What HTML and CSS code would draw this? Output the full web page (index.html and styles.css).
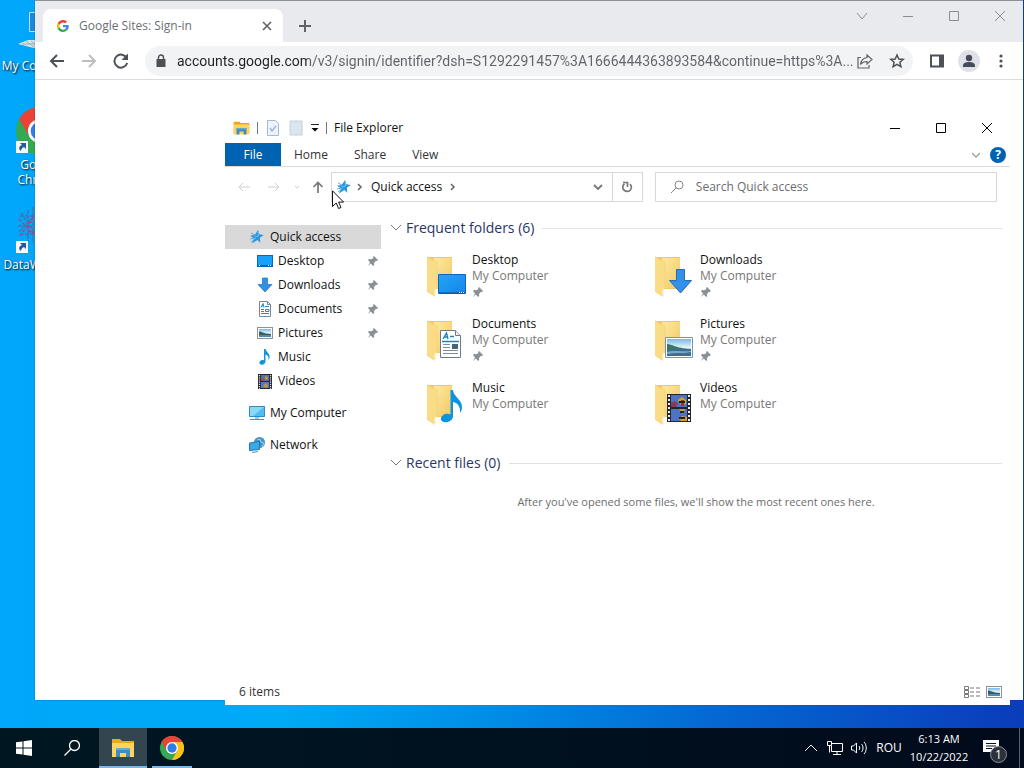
FILE: index.html
```html
<!DOCTYPE html>
<html lang="en">
<head>
  <meta charset="UTF-8">
  <meta name="viewport" content="width=device-width, initial-scale=1.0">
  <title>Desktop</title>
  <link rel="stylesheet" href="styles.css">
</head>
<body>

<!-- shared icons -->
<svg class="sprite" aria-hidden="true">
  <defs>
    <linearGradient id="g-folder" x1="0" y1="0" x2="1" y2="1">
      <stop offset="0" stop-color="#ffe9a6"/><stop offset="1" stop-color="#f0c860"/>
    </linearGradient>
    <linearGradient id="g-blue" x1="0" y1="0" x2="1" y2="1">
      <stop offset="0" stop-color="#22a7f5"/><stop offset="1" stop-color="#1684ea"/>
    </linearGradient>
    <linearGradient id="g-sky" x1="0" y1="0" x2="0" y2="1">
      <stop offset="0" stop-color="#79b8ea"/><stop offset="0.5" stop-color="#e6f5fb"/><stop offset="1" stop-color="#8cc4dc"/>
    </linearGradient>
  </defs>
  <symbol id="pin" viewBox="0 0 12 12">
    <path d="M7 1l4 4-1 1-1-.3L7 8l.2 2-1 1-2.400-2.500L1 11l2-3.600L1 5l1-1 2.200.200L6.500 3 6 2z" fill="#8b9096"/>
  </symbol>
  <symbol id="star" viewBox="0 0 16 16">
    <path d="M9 1l1.300 4.300 4.500.7-4 2.700.6 5L8.300 11 3 14.500l2-5-4-2.800 4.800-.7z" fill="#2b93dc"/>
    <path d="M2 4l4 2M1 10l5-1M2 13l5-4" stroke="#5cb0e6" stroke-width="1"/>
    <path d="M9 3l.5 4-4 1" stroke="#6dc3f5" fill="none"/>
  </symbol>
  <symbol id="desktop" viewBox="0 0 16 16">
    <rect x=".5" y="2.500" width="15" height="11" fill="#18a0fb" stroke="#0c68b4"/>
    <path d="M1 12.500h14" stroke="#0a5ca8"/>
    <path d="M2 12.500h1M11 12.500h1M13 12.500h1" stroke="#fff"/>
  </symbol>
  <symbol id="down" viewBox="0 0 16 16">
    <path d="M5.500 1h5v6.500h4.500L8 15 1 7.500h4.500z" fill="#3390e2" stroke="#2273c4" stroke-width=".7"/>
  </symbol>
  <symbol id="doc" viewBox="0 0 16 16">
    <path d="M2.500.5h8l3 3v12h-11z" fill="#fff" stroke="#7b8794"/>
    <path d="M10.500.5v3h3" fill="none" stroke="#7b8794"/>
    <path d="M4 6.500l2-4 1 4M4.500 5h2M8 5.500h4M4 8.500h3M4 10.500h3M4 12.500h8M8.500 8.500h3.500v2H8.500z" fill="none" stroke="#3483b8"/>
  </symbol>
  <symbol id="pic" viewBox="0 0 16 16">
    <rect x=".5" y="2.500" width="15" height="11" fill="#fff" stroke="#8795a3"/>
    <rect x="2" y="4" width="12" height="8" fill="url(#g-sky)"/>
    <path d="M2 6.500c3 0 4 2 12 2.500v1H2z" fill="#36605d"/>
    <path d="M2 10h12v2H2z" fill="#4c8bb8"/>
  </symbol>
  <symbol id="note" viewBox="0 0 16 16">
    <path d="M7 0h1.500c.5 3 5 4.500 4 9-.2 1-.7 1.500-1 2 .4-3-.5-4.500-3-5.500v7c0 2-2 3.500-4 3.300-2-.2-2.800-2-1.500-3.500 1-1.200 2.700-1.600 4-1z" fill="#1295de"/>
  </symbol>
  <symbol id="film" viewBox="0 0 16 16">
    <rect x="1" y="1" width="14" height="15" fill="#25272b"/>
    <rect x="4" y="2" width="8" height="6" fill="#536fb5"/>
    <rect x="4" y="9" width="8" height="6" fill="#5d78c2"/>
    <path d="M8 3l3 1v2L8 7zM6 13l3-3 2 3-2 2z" fill="#c09a2c"/>
    <path d="M4 6l3-1v3H4z" fill="#9a4c68"/>
    <path d="M2.500 2v14M13.500 2v14" stroke="#e5e6ea" stroke-width="1.200" stroke-dasharray="1.200 1"/>
  </symbol>
  <symbol id="explorer" viewBox="0 0 24 20">
    <path d="M1 1h8l2 2h12v15H1z" fill="#e8a91e"/>
    <path d="M1 5h22v14H1z" fill="#ffd35c"/>
    <path d="M5 19v-9h14v9h-4v-4H9v4z" fill="#3c8cc4"/>
    <path d="M5 10h14v2H5z" fill="#66a9d4"/>
  </symbol>
  <symbol id="folder" viewBox="0 0 42 42">
    <path d="M2 2h24v32H6z" fill="#efc865"/>
    <path d="M8 3h18v30H8z" fill="url(#g-folder)"/>
    <path d="M1 2l10 5v27l-2 1v7L1 37z" fill="#fbdc86"/>
    <path d="M1 2l10 5v27" fill="none" stroke="#f4d27a"/>
    <path d="M8 36l2-3v6l-1 3z" fill="#fff4cd"/>
  </symbol>
  <symbol id="chrome" viewBox="0 0 48 48">
    <circle cx="24" cy="24" r="24" fill="#34a853"/>
    <path d="M24 24L3.200 12A24 24 0 0 1 44.800 12z" fill="#ea4335"/>
    <path d="M24 12h20.800A24 24 0 0 1 24 48l10.400-18z" fill="#fbc116"/>
    <path d="M3.200 12L13.600 30 24 24V12z" fill="#ea4335"/>
    <circle cx="24" cy="24" r="12" fill="#fff"/>
    <circle cx="24" cy="24" r="9.300" fill="#2f7de9"/>
  </symbol>
  <symbol id="shortcut" viewBox="0 0 12 12">
    <path d="M0 0h12v12H0z" fill="#f5f8fc"/>
    <path d="M4 2h6v6L8 6c-2 1-3 2-3 4-3-2-2-5 1-6z" fill="#235b9f"/>
  </symbol>
</svg>

<div class="desktop">
  <div class="workspace">

    <div class="shortcuts">
      <a class="shortcut" href="#">
        <svg viewBox="0 0 48 48"><path d="M13.500 4.500h32v19h-32z" fill="#1889db" stroke="#bfe2f8"/><path d="M2 36l10-4h32v8H18z" fill="#dce7ec"/><path d="M6 36h35M10 33l8 6M15 33l8 6" stroke="#8eadba"/></svg>
        <span>My Computer</span>
      </a>
      <a class="shortcut" href="#">
        <svg viewBox="0 0 48 48"><use href="#chrome"/><use href="#shortcut" x="0" y="34" width="12" height="12"/></svg>
        <span>Google<br>Chrome</span>
      </a>
      <a class="shortcut" href="#">
        <svg viewBox="0 0 48 48"><g fill="none"><path d="M12 3v32M17 0v36M4 9h40M2 19h42M4 27h40M5 6l15 22M3 25L20 7" stroke="#3f74b8" stroke-width="1.500" stroke-dasharray="4 1"/><path d="M3 12l15 16M4 29l14-20M13 15h8v10h-8z" stroke="#93508c" stroke-width="1.500" stroke-dasharray="3 2"/></g><use href="#shortcut" x="0" y="34" width="12" height="12"/></svg>
        <span>DataWorkers</span>
      </a>
    </div>

    <section class="window browser" aria-label="Google Chrome">
      <div class="tab-strip">
        <div class="tab">
          <svg class="favicon" viewBox="0 0 48 48"><path fill="#ea4335" d="M24 9.500c3.500 0 6.700 1.200 9.200 3.600l6.900-6.900C35.900 2.400 30.500 0 24 0 14.600 0 6.500 5.400 2.600 13.200l8 6.200C12.400 13.700 17.700 9.500 24 9.500z"/><path fill="#4285f4" d="M47 24.600c0-1.600-.2-3.100-.4-4.600H24v9h12.900c-.6 3-2.300 5.500-4.800 7.200l7.700 6C44.400 38 47 31.900 47 24.600z"/><path fill="#fbbc05" d="M10.500 28.600a14.500 14.500 0 0 1 0-9.200l-8-6.200a24 24 0 0 0 0 21.600z"/><path fill="#34a853" d="M24 48c6.500 0 11.900-2.100 15.900-5.800l-7.700-6c-2.200 1.500-4.900 2.300-8.200 2.300-6.300 0-11.600-4.200-13.500-9.900l-8 6.200C6.500 42.600 14.600 48 24 48z"/></svg>
          <span class="tab-title">Google Sites: Sign-in</span>
          <button class="icon-btn tab-close" aria-label="Close tab"><svg viewBox="0 0 16 16"><path d="M4 4l8 8M12 4l-8 8" stroke="#5f6368" stroke-width="1.600"/></svg></button>
        </div>
        <button class="icon-btn new-tab" aria-label="New tab"><svg viewBox="0 0 16 16"><path d="M8 2v12M2 8h12" stroke="#5f6368" stroke-width="2"/></svg></button>
        <div class="controls muted">
          <button aria-label="Search tabs"><svg viewBox="0 0 12 12"><path d="M1 3l5 6 5-6"/></svg></button>
          <button aria-label="Minimize"><svg viewBox="0 0 12 12"><path d="M1 6.500h10"/></svg></button>
          <button aria-label="Maximize"><svg viewBox="0 0 12 12"><path d="M1.500 1.500h9v9h-9z"/></svg></button>
          <button aria-label="Close"><svg viewBox="0 0 12 12"><path d="M1 1l10 10M11 1L1 11"/></svg></button>
        </div>
      </div>
      <div class="toolbar">
        <button class="icon-btn" aria-label="Back"><svg viewBox="0 0 16 16"><path d="M15 8H2M8 2L2 8l6 6" stroke="#4d5156" stroke-width="2" fill="none"/></svg></button>
        <button class="icon-btn" aria-label="Forward"><svg viewBox="0 0 16 16"><path d="M1 8h13M8 2l6 6-6 6" stroke="#bcbec2" stroke-width="2" fill="none"/></svg></button>
        <button class="icon-btn" aria-label="Reload"><svg viewBox="0 0 16 16"><path d="M13.700 5A6.500 6.500 0 1 0 14.200 10" stroke="#4d5156" stroke-width="2" fill="none"/><path d="M15 .5V7H8.500z" fill="#4d5156"/></svg></button>
        <div class="omnibox">
          <svg class="lock" viewBox="0 0 10 14"><path d="M.5 5h9v8h-9z" fill="#4d5156"/><path d="M2.500 5V3.500a2.500 2.500 0 0 1 5 0V5" stroke="#4d5156" stroke-width="1.400" fill="none"/></svg>
          <input class="url" type="text" aria-label="Address" value="accounts.google.com/v3/signin/identifier?dsh=S1292291457%3A1666444363893584&amp;continue=https%3A...">
          <button class="icon-btn" aria-label="Share"><svg viewBox="0 0 16 16"><path d="M4 4.500H1V15h11v-3" stroke="#5f6368" stroke-width="1.200" fill="none"/><path d="M10 2l5 4.500-5 4.500V8.500c-3 0-5 1-6.500 3C4 8 6 5 10 4.500z" stroke="#5f6368" stroke-width="1.200" fill="none"/></svg></button>
          <button class="icon-btn" aria-label="Bookmark this tab"><svg viewBox="0 0 16 16"><path d="M8 2l1.800 4 4.400.4-3.300 2.900 1 4.300L8 11.300l-3.900 2.300 1-4.300-3.300-2.900L6.200 6z" stroke="#4d5156" stroke-width="1.500" fill="none"/></svg></button>
        </div>
        <div class="actions">
          <button class="icon-btn" aria-label="Side panel"><svg viewBox="0 0 16 16"><path d="M2 2.500h12v11H2z" stroke="#4d5156" stroke-width="2" fill="none"/><path d="M10 2h4v12h-4z" fill="#4d5156"/></svg></button>
          <button class="icon-btn avatar" aria-label="Profile"><svg viewBox="0 0 16 16"><circle cx="8" cy="5" r="3.200" fill="#474b57"/><path d="M2 14v-1.500C2 10 5 9 8 9s6 1 6 3.500V14z" fill="#474b57"/></svg></button>
          <button class="icon-btn" aria-label="Menu"><svg viewBox="0 0 16 16" fill="#4d5156"><circle cx="8" cy="3" r="1.600"/><circle cx="8" cy="8" r="1.600"/><circle cx="8" cy="13" r="1.600"/></svg></button>
        </div>
      </div>
    </section>

    <section class="window explorer" aria-label="File Explorer">
      <div class="title-bar">
        <svg class="small-icon" viewBox="0 0 24 20"><use href="#explorer"/></svg>
        <i class="divider"></i>
        <button class="icon-btn" aria-label="Properties"><svg viewBox="0 0 16 16"><path d="M2.500.5h8l3 3v12h-11z" fill="#edf3fb" stroke="#a7b9d3"/><path d="M5 8l2 3 4-5" stroke="#9cb3d6" stroke-width="1.400" fill="none"/></svg></button>
        <button class="icon-btn" aria-label="New folder"><svg viewBox="0 0 16 16"><path d="M2 1h12v14H2z" fill="#dbe4ef" stroke="#c3d0df"/></svg></button>
        <button class="icon-btn customize" aria-label="Customize toolbar"><svg viewBox="0 0 8 8"><path d="M0 .5h8" stroke="#222"/><path d="M.5 4h7L4 7.500z" fill="#000"/></svg></button>
        <i class="divider"></i>
        <span class="title">File Explorer</span>
        <div class="controls">
          <button aria-label="Minimize"><svg viewBox="0 0 12 12"><path d="M1 6.500h10"/></svg></button>
          <button aria-label="Maximize"><svg viewBox="0 0 12 12"><path d="M1.500 1.500h9v9h-9z"/></svg></button>
          <button aria-label="Close"><svg viewBox="0 0 12 12"><path d="M1 1l10 10M11 1L1 11"/></svg></button>
        </div>
      </div>

      <div class="ribbon">
        <button class="file-tab">File</button>
        <button>Home</button>
        <button>Share</button>
        <button>View</button>
        <button class="icon-btn expand" aria-label="Expand the ribbon"><svg viewBox="0 0 8 8"><path d="M0 2l4 4 4-4" stroke="#a0a0a0" stroke-width="1.300" fill="none"/></svg></button>
        <button class="help" aria-label="Help">?</button>
      </div>

      <div class="address-row">
        <button class="icon-btn nav" aria-label="Back"><svg viewBox="0 0 12 12"><path d="M12 6H1M5 2L1 6l4 4" stroke="#d0d0d0" fill="none"/></svg></button>
        <button class="icon-btn nav" aria-label="Forward"><svg viewBox="0 0 12 12"><path d="M0 6h11M7 2l4 4-4 4" stroke="#d0d0d0" fill="none"/></svg></button>
        <button class="icon-btn recent" aria-label="Recent locations"><svg viewBox="0 0 6 6"><path d="M1 2l2 2 2-2" stroke="#ccc" fill="none"/></svg></button>
        <button class="icon-btn up" aria-label="Up"><svg viewBox="0 0 12 12"><path d="M6 12V1.500M1.500 6L6 1.500 10.500 6" stroke="#777" stroke-width="1.700" fill="none"/></svg></button>
        <div class="path">
          <svg class="crumb-icon"><use href="#star"/></svg>
          <svg class="sep" viewBox="0 0 6 8"><path d="M1 1l3 3-3 3" stroke="#666" stroke-width="1.500" fill="none"/></svg>
          <button class="crumb">Quick access</button>
          <svg class="sep" viewBox="0 0 6 8"><path d="M1 1l3 3-3 3" stroke="#666" stroke-width="1.500" fill="none"/></svg>
          <button class="icon-btn previous" aria-label="Previous locations"><svg viewBox="0 0 10 10"><path d="M1 3l4 4 4-4" stroke="#777" stroke-width="1.800" fill="none"/></svg></button>
          <button class="icon-btn refresh" aria-label="Refresh"><svg viewBox="0 0 12 12"><path d="M9 3a4.300 4.300 0 1 1-5.500-.3" stroke="#777" stroke-width="1.700" fill="none"/><path d="M2 1.500h4.500V6" stroke="#777" stroke-width="1.700" fill="none"/></svg></button>
        </div>
        <label class="search">
          <svg viewBox="0 0 14 14"><circle cx="9" cy="5" r="4" stroke="#888" fill="none"/><path d="M6 8l-5 5" stroke="#888"/></svg>
          <input type="text" placeholder="Search Quick access" aria-label="Search Quick access">
        </label>
      </div>

      <div class="panes">
        <nav class="sidebar">
          <a class="root active" href="#"><svg><use href="#star"/></svg>Quick access</a>
          <a href="#"><svg><use href="#desktop"/></svg>Desktop<svg class="pin"><use href="#pin"/></svg></a>
          <a href="#"><svg><use href="#down"/></svg>Downloads<svg class="pin"><use href="#pin"/></svg></a>
          <a href="#"><svg><use href="#doc"/></svg>Documents<svg class="pin"><use href="#pin"/></svg></a>
          <a href="#"><svg><use href="#pic"/></svg>Pictures<svg class="pin"><use href="#pin"/></svg></a>
          <a href="#"><svg><use href="#note"/></svg>Music</a>
          <a href="#"><svg><use href="#film"/></svg>Videos</a>
          <a class="root" href="#"><svg viewBox="0 0 16 16"><path d="M.5 1.500h15v10H.5z" fill="#4fbdf0" stroke="#328ab8"/><path d="M1 2h14L4 11H1z" fill="#8ad8f8"/><path d="M6 13h4M1 14.500h14" stroke="#4993b8"/></svg>My Computer</a>
          <a class="root" href="#"><svg viewBox="0 0 16 16"><circle cx="10.500" cy="5.500" r="5.500" fill="#4692c6"/><path d="M8 3l3-1 1 3 3 1-2 4" stroke="#96d0ee" fill="none"/><path d="M.5 6l10-1.500v8l-10 1z" fill="#3aa8e4" stroke="#2078b0"/><path d="M3 15.500l6-1" stroke="#4993b8"/></svg>Network</a>
        </nav>

        <main class="content">
          <h2><svg viewBox="0 0 12 12"><path d="M1 3l5 5 5-5" stroke="#777" fill="none"/></svg>Frequent folders (6)</h2>
          <div class="folders">
            <a class="folder" href="#">
              <svg class="big" viewBox="0 0 42 42"><use href="#folder"/><path d="M12.500 19.500h27v19h-27z" fill="url(#g-blue)" stroke="#0f66b5"/><path d="M13 38h26" stroke="#0b4e94"/><path d="M33 37.500h1M35 37.500h1M37 37.500h1" stroke="#fff"/></svg>
              <span class="name">Desktop</span><span class="place">My Computer</span><svg class="pin"><use href="#pin"/></svg>
            </a>
            <a class="folder" href="#">
              <svg class="big" viewBox="0 0 42 42"><use href="#folder"/><path d="M22.500 14.500h8v11h7L26.500 38 15.500 25.500h7z" fill="#3390e8" stroke="#256cb4"/></svg>
              <span class="name">Downloads</span><span class="place">My Computer</span><svg class="pin"><use href="#pin"/></svg>
            </a>
            <a class="folder" href="#">
              <svg class="big" viewBox="0 0 42 42"><use href="#folder"/><path d="M14.500 11.500h15l5 5v22h-20z" fill="#fff" stroke="#6c7a88"/><path d="M29.500 11.500v5h5" fill="#e9eef3" stroke="#6c7a88"/><path d="M17 20l3.500-6 1.500 6M18 18h4M24 17.500h4M16 22.500h17" stroke="#1d83c0" stroke-width="1.400" fill="none"/><path d="M17 25.500h7M17 28.500h7M17 31.500h15M17 34.500h15" stroke="#7d8c9a"/><path d="M26 25h6v5h-6z" fill="#466475"/></svg>
              <span class="name">Documents</span><span class="place">My Computer</span><svg class="pin"><use href="#pin"/></svg>
            </a>
            <a class="folder" href="#">
              <svg class="big" viewBox="0 0 42 42"><use href="#folder"/><path d="M11.500 18.500h27v20h-27z" fill="#fff" stroke="#8093a3"/><path d="M13 20h24v17H13z" fill="url(#g-sky)"/><path d="M13 25c5 0 8 4 24 5v2H13z" fill="#3d7569"/><path d="M13 31h24v6H13z" fill="#356f9c"/><path d="M13 33c6-2 12 0 24-1v1c-8 2-14 0-24 2z" fill="#78a9c6"/></svg>
              <span class="name">Pictures</span><span class="place">My Computer</span><svg class="pin"><use href="#pin"/></svg>
            </a>
            <a class="folder" href="#">
              <svg class="big" viewBox="0 0 42 42"><use href="#folder"/><path d="M24.500 7h2.500c.5 7 9 9 9 17 0 3-1 5-2 6 .8-6-2-10-7-11v14c0 4-4 6.500-8 6.300-4-.3-5.500-4-2.500-6.600 2-2 5-2.500 8-1.200z" fill="#0d94e0"/></svg>
              <span class="name">Music</span><span class="place">My Computer</span>
            </a>
            <a class="folder" href="#">
              <svg class="big" viewBox="0 0 42 42"><use href="#folder"/><path d="M13 11h24v28H13z" fill="#24262b"/><path d="M17 12h16v12H17zM17 26h16v12H17z" fill="#4e73c4"/><path d="M24 17l4-3 4 3v4l-5 1zM25 26h6l-2 5zM25 36l3-3 5 1v4h-6z" fill="#d3a51e"/><path d="M17 20l4-2 3 3-2 3h-5zM27 17h3v6h-3z" fill="#8e3953"/><path d="M25 19h6M26 29h4M25 35h6" stroke="#222" stroke-width="2"/><path d="M15 12v27M35 12v27" stroke="#eef0f3" stroke-width="2" stroke-dasharray="2 2"/></svg>
              <span class="name">Videos</span><span class="place">My Computer</span>
            </a>
          </div>
          <h2><svg viewBox="0 0 12 12"><path d="M1 3l5 5 5-5" stroke="#777" fill="none"/></svg>Recent files (0)</h2>
          <p class="empty">After you've opened some files, we'll show the most recent ones here.</p>
        </main>
      </div>

      <div class="status-bar">
        <span>6 items</span>
        <button class="icon-btn" aria-label="Details view"><svg viewBox="0 0 16 14"><path d="M.5 1.500h4v3h-4zM.5 5.500h4v3h-4zM.5 9.500h4v3h-4zM6 3h4M12 3h4M6 7h4M12 7h4M6 11h4M12 11h4" fill="none" stroke="#777"/></svg></button>
        <button class="icon-btn" aria-label="Large icons view"><svg viewBox="0 0 16 16"><use href="#pic"/></svg></button>
      </div>
    </section>

    <svg class="cursor" viewBox="0 0 12 19"><path d="M.5.8v15.700l3.700-3.500 2.400 5.500 2.400-1-2.400-5.400h5z" fill="#fff" stroke="#111"/></svg>
  </div>

  <footer class="taskbar">
    <button class="task" aria-label="Start"><svg viewBox="0 0 16 16"><path d="M0 2.300l6.500-.9v6.100H0zM7.500 1.300L16 0v7.500H7.500zM0 8.500h6.500v6.100L0 13.700zM7.500 8.500H16V16l-8.500-1.200z" fill="#fff"/></svg></button>
    <button class="task" aria-label="Search"><svg viewBox="0 0 16 16"><circle cx="10.500" cy="5.500" r="5" stroke="#fff" stroke-width="1.300" fill="none"/><path d="M7 9l-6.500 6.500" stroke="#fff" stroke-width="1.300"/></svg></button>
    <button class="task open current" aria-label="File Explorer"><svg viewBox="0 0 24 20"><use href="#explorer"/></svg></button>
    <button class="task open" aria-label="Google Chrome"><svg viewBox="0 0 48 48"><use href="#chrome"/></svg></button>
    <div class="tray">
      <button aria-label="Show hidden icons"><svg viewBox="0 0 16 16"><path d="M2 11l6-6 6 6"/></svg></button>
      <button aria-label="Network"><svg viewBox="0 0 16 16"><path d="M5 3.500h10.500v8H4.500V6M10 11.500v3M6 14.500h8M.5 1.500h4v4h-4zM2.500 5.500v7"/></svg></button>
      <button aria-label="Volume"><svg viewBox="0 0 16 16"><path d="M.5 6h2l3-3v10l-3-3h-2zM8 6c1 1 1 3 0 4M10.500 4c2 2 2 6 0 8M13 2c3 3 3 9 0 12"/></svg></button>
      <button class="lang">ROU</button>
      <button class="clock"><span>6:13 AM</span><span>10/22/2022</span></button>
      <button class="notes" aria-label="Notifications"><svg viewBox="0 0 16 16"><path d="M0 0h16v12h-4v4l-4-4H0z" fill="#fff" stroke="none"/><path d="M3 3.500h10M3 6h10M3 8.500h6" stroke="#07131f"/></svg><span class="count">1</span></button>
      <button class="show-desktop" aria-label="Show desktop"></button>
    </div>
  </footer>
</div>

</body>
</html>
```

FILE: styles.css
```css
* { box-sizing: border-box; }
body {
  margin: 0;
  font-family: "Open Sans", "Noto Sans", sans-serif;
  font-size: 12px;
  line-height: 16px;
  color: #111;
}
a {
  color: inherit;
  text-decoration: none;
}
button, input {
  font: inherit;
  color: inherit;
  border: none;
  background: none;
  padding: 0;
  margin: 0;
}
svg {
  display: block;
  width: 16px;
  height: 16px;
  flex: none;
}
.sprite {
  position: absolute;
  width: 0;
  height: 0;
}
.desktop {
  min-height: 100vh;
  display: flex;
  flex-direction: column;
  background: linear-gradient(90deg, #00a7fa 0%, #00aaf5 28%, #008ae4 50%, #0565d0 72%, #0a3cba 100%);
}
.workspace {
  flex: 1;
  position: relative;
  overflow: hidden;
}

/* desktop shortcuts */
.shortcuts {
  width: 80px;
  display: flex;
  flex-direction: column;
  gap: 20px;
  padding-top: 8px;
}
.shortcut {
  display: flex;
  flex-direction: column;
  align-items: center;
  gap: 2px;
  color: #fff;
  line-height: 15px;
  text-align: center;
  white-space: nowrap;
  text-shadow: 1px 1px 2px #000;
}
.shortcut svg {
  width: 48px;
  height: 48px;
}
.shortcut:first-child { margin-bottom: 14px; }

/* windows */
.window {
  position: absolute;
  display: flex;
  flex-direction: column;
  background: #fff;
}
.browser {
  top: 0;
  left: 35px;
  right: 1px;
  bottom: 28px;
  border-top: 1px solid #8f8f99;
  box-shadow: 0 0 1px #234;
}
.explorer {
  top: 112px;
  left: 225px;
  right: 14px;
  bottom: 23px;
}
.icon-btn {
  display: flex;
  align-items: center;
  justify-content: center;
  flex: none;
}
.controls {
  display: flex;
  margin-left: auto;
}
.controls button {
  width: 46px;
  height: 30px;
  display: flex;
  align-items: center;
  justify-content: center;
}
.controls svg {
  width: 12px;
  height: 12px;
  fill: none;
  stroke: #000;
}
.controls.muted svg { stroke: #8b8d91; }

/* browser */
.tab-strip {
  display: flex;
  height: 41px;
  background: #e8eaed;
  padding-left: 8px;
}
.tab {
  display: flex;
  align-items: center;
  width: 240px;
  margin-top: 8px;
  padding: 0 8px 0 14px;
  border-radius: 8px 8px 0 0;
  background: #fff;
}
.favicon {
  width: 12px;
  height: 12px;
}
.tab-title {
  flex: 1;
  padding-left: 10px;
  color: #6b6f74;
}
.tab-close { width: 16px; }
.new-tab {
  width: 44px;
  margin-top: 8px;
}
.toolbar {
  display: flex;
  align-items: center;
  gap: 16px;
  height: 38px;
  padding: 0 14px;
  border-bottom: 1px solid #dadce0;
}
.omnibox {
  flex: 1;
  display: flex;
  align-items: center;
  gap: 16px;
  height: 30px;
  padding: 0 8px 0 10px;
  border-radius: 15px;
  background: #f1f3f4;
}
.lock {
  width: 12px;
  height: 14px;
}
.url {
  flex: 1;
  min-width: 0;
  height: 24px;
  margin: 0 -16px 0 -6px;
  font-family: Roboto, "Open Sans", sans-serif;
  font-size: 14px;
  text-overflow: ellipsis;
  /* dark host, lighter path */
  background: linear-gradient(90deg, #202124 131px, #5f6368 131px);
  -webkit-background-clip: text;
  background-clip: text;
  -webkit-text-fill-color: transparent;
}
.actions {
  display: flex;
  align-items: center;
  gap: 13px;
}
.avatar {
  width: 22px;
  height: 22px;
  border-radius: 50%;
  background: #dfe1e8;
}

/* explorer chrome */
.title-bar {
  display: flex;
  align-items: center;
  height: 31px;
  gap: 7px;
  padding-left: 8px;
}
.small-icon { width: 17px; }
.divider {
  width: 1px;
  height: 12px;
  background: #777;
}
.title-bar .icon-btn { width: 16px; }
.title-bar .customize { width: 8px; }
.customize svg {
  width: 8px;
  height: 8px;
}
.ribbon {
  display: flex;
  align-items: center;
  height: 24px;
  padding-right: 4px;
  border-bottom: 1px solid #d9dadc;
}
.ribbon button {
  height: 23px;
  padding: 0 13px;
  color: #333;
}
.ribbon .file-tab {
  width: 56px;
  padding: 0;
  background: #0063b1;
  color: #fff;
}
.ribbon .expand {
  margin-left: auto;
  padding: 0 10px;
}
.expand svg {
  width: 8px;
  height: 8px;
}
.ribbon .help {
  width: 16px;
  height: 16px;
  padding: 0;
  border-radius: 50%;
  background: #0063b1;
  color: #fff;
  font-weight: bold;
}
.address-row {
  display: flex;
  align-items: center;
  height: 40px;
  padding: 0 13px 0 4px;
}
.nav { width: 30px; }
.nav svg, .up svg {
  width: 12px;
  height: 12px;
}
.recent { width: 16px; }
.recent svg {
  width: 6px;
  height: 6px;
}
.up { width: 26px; }
.path {
  display: flex;
  align-items: center;
  flex: 15;
  height: 30px;
  border: 1px solid #d9d9d9;
  padding-left: 4px;
}
.crumb-icon {
  width: 16px;
  height: 16px;
}
.sep {
  width: 6px;
  height: 8px;
  margin: 0 8px 0 5px;
}
.crumb + .sep { margin-left: 8px; }
.previous {
  width: 28px;
  margin-left: auto;
}
.previous svg {
  width: 10px;
  height: 10px;
}
.refresh {
  width: 30px;
  height: 28px;
  border-left: 1px solid #d9d9d9;
}
.refresh svg {
  width: 12px;
  height: 12px;
}
.search {
  display: flex;
  align-items: center;
  flex: 16;
  gap: 12px;
  height: 30px;
  margin-left: 12px;
  padding-left: 14px;
  border: 1px solid #d9d9d9;
}
.search svg {
  width: 14px;
  height: 14px;
}
.search input {
  flex: 1;
  min-width: 0;
}
.search input::placeholder { color: #6d6d6d; }

/* panes */
.panes {
  flex: 1;
  display: flex;
}
.sidebar {
  width: 156px;
  padding-top: 18px;
}
.sidebar a {
  display: flex;
  align-items: center;
  gap: 5px;
  height: 24px;
  padding: 0 2px 0 32px;
}
.sidebar .root {
  padding-left: 24px;
  margin-top: 8px;
}
.sidebar .active {
  margin-top: 0;
  background: #d9d9d9;
}
.pin {
  width: 12px;
  height: 12px;
}
.sidebar .pin { margin-left: auto; }
.content {
  flex: 1;
  padding: 9px 8px 0 9px;
}
.content h2 {
  display: flex;
  align-items: center;
  gap: 4px;
  height: 24px;
  margin: 0;
  font-size: 14px;
  font-weight: normal;
  color: #2b3566;
}
.content h2::after {
  content: "";
  flex: 1;
  height: 1px;
  margin-left: 4px;
  background: #e2e2e2;
}
.content h2 svg {
  width: 12px;
  height: 12px;
}
.folders {
  display: grid;
  grid-template-columns: repeat(auto-fill, 228px);
  grid-auto-rows: 64px;
  padding: 12px 0 7px 36px;
}
.folder {
  display: grid;
  grid-template-columns: 42px 1fr;
  grid-template-rows: 16px 16px 16px;
  column-gap: 4px;
  align-items: center;
}
.big {
  grid-row: 1 / 4;
  width: 42px;
  height: 42px;
}
.place { color: #777; }
.empty {
  margin: 19px 0 0;
  font-size: 11px;
  text-align: center;
  color: #6d6d6d;
}
.status-bar {
  display: flex;
  align-items: center;
  gap: 6px;
  height: 26px;
  padding: 0 8px 0 14px;
  color: #333;
}
.status-bar span { margin-right: auto; }
.cursor {
  position: absolute;
  left: 332px;
  top: 190px;
  width: 12px;
  height: 19px;
}

/* taskbar */
.taskbar {
  display: flex;
  height: 40px;
  background: linear-gradient(90deg, #001722, #00101f 60%, #020a1c);
  color: #fff;
}
.task {
  width: 48px;
  display: flex;
  align-items: center;
  justify-content: center;
}
.task.open {
  position: relative;
  margin-left: 1px;
}
.task.current {
  margin-left: 3px;
  background: #33454f;
}
.task.open svg {
  width: 24px;
  height: 24px;
}
.task.open::after {
  content: "";
  position: absolute;
  left: 4px;
  right: 4px;
  bottom: 0;
  height: 2px;
  background: #76b9ed;
}
.task.current::after {
  left: 0;
  right: 0;
}
.tray {
  display: flex;
  align-items: stretch;
  margin-left: auto;
}
.tray button {
  min-width: 24px;
  display: flex;
  align-items: center;
  justify-content: center;
}
.tray svg {
  fill: none;
  stroke: #fff;
}
.tray .lang { width: 36px; }
.tray .clock {
  width: 64px;
  flex-direction: column;
  font-size: 11px;
  line-height: 18px;
}
.tray .notes {
  position: relative;
  width: 48px;
  padding-right: 8px;
}
.count {
  position: absolute;
  right: 12px;
  bottom: 5px;
  width: 17px;
  height: 17px;
  border: 1px solid #8a8f96;
  border-radius: 50%;
  background: #2b323b;
  line-height: 15px;
}
.tray .show-desktop {
  min-width: 5px;
  border-left: 1px solid #58626e;
}
```
